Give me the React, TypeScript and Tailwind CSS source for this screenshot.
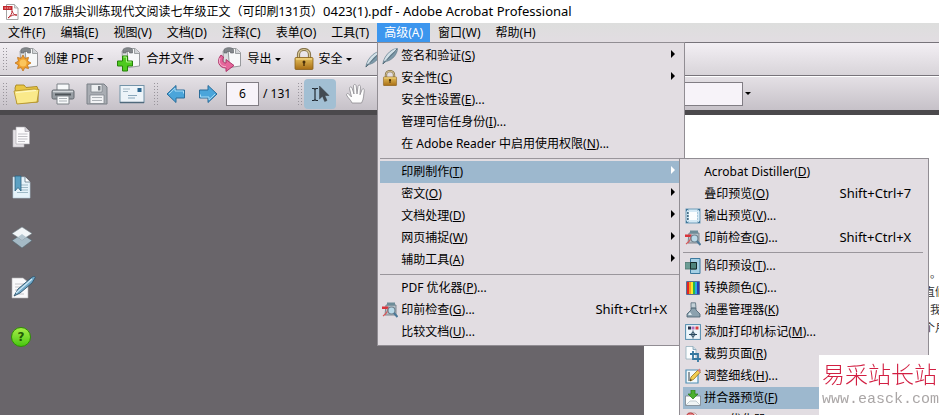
import React from 'react';

type IconProps = { className?: string };

interface MenuEntry {
  label: string;
  hotkey?: string;
  tail?: string;
  shortcut?: string;
  icon?: React.ReactNode;
  submenu?: boolean;
}

const Feather = ({ className = '' }: IconProps) => (
  <svg viewBox="0 0 16 18" className={className} aria-hidden="true">
    <path d="M.8 17C1.500 12 4 8 8 4.500 10.500 2.500 13 1.500 15.500 1.500 15.500 6 12 11 8 13 6 14 4 14.500 3 15z" fill="#7d99a9" stroke="#5b7585" strokeWidth=".6" />
    <path d="M3 14C5 9 9 5 14 2.500" fill="none" stroke="#d3e1e8" strokeWidth="2.400" />
    <path d="M1 17C5 12 10 8 15 2" fill="none" stroke="#4d6370" strokeWidth=".9" />
  </svg>
);

const LockIcon = ({ className = '' }: IconProps) => (
  <svg viewBox="0 0 20 22" className={className} aria-hidden="true">
    <defs>
      <linearGradient id="lockBody" x1="0" y1="0" x2="0" y2="1">
        <stop offset="0" stopColor="#e6c15c" />
        <stop offset="1" stopColor="#a86d14" />
      </linearGradient>
    </defs>
    <path d="M4.500 11V6.500a5.500 5 0 0 1 11 0V11" fill="none" stroke="#85734a" strokeWidth="3.200" />
    <path d="M4.500 11V6.500a5.500 5 0 0 1 11 0V11" fill="none" stroke="#dccb9a" strokeWidth="1.200" />
    <rect x="1" y="9.500" width="18" height="12" rx="1" fill="url(#lockBody)" stroke="#87601c" strokeWidth=".8" />
    <path d="M2 11h16" stroke="#f6df96" />
    <circle cx="10" cy="14" r="1.500" fill="#4a300a" />
    <path d="M10 14v4" stroke="#4a300a" strokeWidth="1.400" />
  </svg>
);

// page with a clip on top, shared by the three task buttons
const TaskPage = ({ children }: { children: React.ReactNode }) => (
  <svg viewBox="0 0 26 26" className="h-[26px] w-[26px] shrink-0" aria-hidden="true">
    <path d="M6 5L14 2.500V18L7 20Z" fill="#dcdee0" stroke="#8e9194" strokeWidth=".8" />
    <path d="M11 2.500h8l4.500 4V20l-11 1.500z" fill="#f7f8f9" stroke="#8d9093" strokeWidth=".9" />
    <path d="M18.500 2.500v5h5" fill="#cfd2d5" stroke="#8d9093" strokeWidth=".8" />
    <path d="M7 6V3.500c2-2.500 8-2.500 9.500 0V7h-3V5.500H10V7H7z" fill="#83878b" stroke="#5c6064" strokeWidth=".6" />
    {children}
  </svg>
);

const CreateIcon = () => (
  <TaskPage>
    <path d="M9 9l1.800 3.400 3.700-1-1 3.700L17 17l-3.500 1.900 1 3.700-3.700-1L9 25l-1.800-3.400-3.700 1 1-3.700L1 17l3.500-1.900-1-3.700 3.700 1z" fill="#f0a02c" stroke="#c0711a" strokeWidth=".8" />
    <circle cx="9" cy="17" r="3.500" fill="#fbc55c" />
  </TaskPage>
);

const CombineIcon = () => (
  <TaskPage>
    <path d="M6.500 10h5v5h5v5h-5v5h-5v-5h-5v-5h5z" fill="#4fca20" stroke="#278309" />
    <path d="M7.500 11h3v5h5" fill="none" stroke="#b2f28c" />
  </TaskPage>
);

const ExportIcon = () => (
  <TaskPage>
    <path d="M4 9c-5 6-2 13 5 13v3.500l8-6-8-6V17c-3 0-4-2-2.500-6z" fill="#e6669b" stroke="#a82d62" strokeWidth=".9" />
    <path d="M3 12c-2 5 1 8.500 6 8.800" fill="none" stroke="#f8b9d2" />
  </TaskPage>
);

const PdfFileIcon = () => (
  <svg viewBox="0 0 16 16" className="h-4 w-4" aria-hidden="true">
    <path d="M3.500.500h8l3.500 3.500v11.500H3.500z" fill="#fdfdfd" stroke="#a4a4a4" />
    <path d="M11.500.500V4H15" fill="#ddd" stroke="#a4a4a4" strokeWidth=".8" />
    <rect x="0" y="2" width="9.500" height="4" fill="#c3262b" />
    <path d="M1.500 4h6" stroke="#f5c9c9" strokeDasharray="1.500 .8" />
    <path d="M5 14c2.500-2 4.500-5 4-7.500C10 10 12 11.500 14 11c-3-.8-6 .5-9 3z" fill="none" stroke="#b7252c" />
  </svg>
);

const FolderIcon = () => (
  <svg viewBox="0 0 28 22" className="h-[22px] w-7" aria-hidden="true">
    <path d="M2 5l1-3h8l2 2.500 11-1 1 3V19L4 20.500z" fill="#e9c643" stroke="#a78720" strokeWidth=".9" />
    <path d="M1 8l20-2 5 .5-2 12.500L4 21z" fill="#fae98a" stroke="#b6952c" strokeWidth=".9" />
    <path d="M3 9.500l20-2" stroke="#fff9cb" />
  </svg>
);

const PrinterIcon = () => (
  <svg viewBox="0 0 24 24" className="h-6 w-6" aria-hidden="true">
    <path d="M6 8V2h12v6" fill="#f7f9fa" stroke="#7d8287" />
    <rect x="1" y="8" width="22" height="9" rx="1.500" fill="#989ea4" stroke="#62686e" />
    <path d="M2 9.500h20" stroke="#d3d7da" strokeWidth="1.500" />
    <path d="M4 12.500h16" stroke="#4e5459" strokeWidth="2" />
    <path d="M6 14h12v8H6z" fill="#f7f9fa" stroke="#7d8287" />
    <path d="M8 16.500h8M8 19h8" stroke="#aab0b5" />
  </svg>
);

const SaveIcon = () => (
  <svg viewBox="0 0 24 24" className="h-6 w-6" aria-hidden="true">
    <path d="M2 2h17l3 3v17H2z" fill="#a9adb3" stroke="#7b8087" />
    <path d="M6 2.500h11V10H6z" fill="#eceef0" stroke="#7e848a" strokeWidth=".8" />
    <path d="M13 4h2.500v4.500H13z" fill="#767c83" />
    <path d="M5 13h14v8.500H5z" fill="#f2f3f5" stroke="#7e848a" strokeWidth=".8" />
    <path d="M7 15.500h10M7 18.500h10" stroke="#abb0b5" />
  </svg>
);

const MailIcon = () => (
  <svg viewBox="0 0 26 20" className="h-5 w-[26px]" aria-hidden="true">
    <rect x="1" y="1.500" width="24" height="17" fill="#edf4f9" stroke="#7393a8" />
    <path d="M1 18.500h24" stroke="#506a7c" strokeWidth="1.500" />
    <rect x="18.500" y="4" width="4" height="4" fill="#2d6790" />
    <path d="M4 5h7M4 7.500h5" stroke="#a4b8c5" />
    <path d="M9 11.500h9M9 14h7" stroke="#88a6ba" />
  </svg>
);

const ArrowIcon = ({ className = '' }: IconProps) => (
  <svg viewBox="0 0 20 20" className={className} aria-hidden="true">
    <path d="M1 10L10 1.500V6h8.500v8H10v4.500z" fill="#4ba5da" stroke="#2b6d9a" />
    <path d="M3 10l6-5.800V7h8.500v2.500" fill="none" stroke="#a9dcf6" />
  </svg>
);

const SelectToolIcon = () => (
  <svg viewBox="0 0 20 18" className="h-[18px] w-5" aria-hidden="true">
    <path d="M2 3.500h2l1 1 1-1h2M5 4.500v10M2 15.500h2l1-1 1 1h2" fill="none" stroke="#222b33" strokeWidth="1.200" />
    <path d="M9.500 1v13l3-2.800 2.200 5.300 2.300-1-2.200-5H19z" fill="#434b53" stroke="#343a40" strokeWidth=".5" />
  </svg>
);

const HandIcon = () => (
  <svg viewBox="0 0 22 22" className="h-[22px] w-[22px]" aria-hidden="true">
    <path d="M7 20c-1-3-4-5-5.500-8 0-2 2-2 3 0l2 2L4.500 5.500c0-2 2-2.300 2.500-.5l2 6-.5-8c0-2 2.500-2 2.700 0l.8 8 1-7.500c.3-2 2.500-1.700 2.500.2l-.5 8 2-5c.7-1.700 2.600-1 2.300.8C18.500 12 19 16 16.500 20z" fill="#fdfdfd" stroke="#8d8b90" strokeWidth=".8" />
  </svg>
);

const PagesIcon = () => (
  <svg viewBox="0 0 22 24" className="h-6 w-[22px]" aria-hidden="true">
    <path d="M2 5h11v17H2z" fill="#e4e1e5" stroke="#bab6bc" strokeWidth=".6" />
    <path d="M5 2h9l4.500 4.500V19H5z" fill="#fcfbfd" stroke="#a9a6ab" strokeWidth=".6" />
    <path d="M14 2v4.500h4.500" fill="#d5d2d8" stroke="#9b979d" strokeWidth=".6" />
    <path d="M7 9h9.500M7 11.500h9.500M7 14h9.500M7 16.500h7" stroke="#b3b2b8" strokeWidth=".8" />
  </svg>
);

const BookmarkPageIcon = () => (
  <svg viewBox="0 0 22 24" className="h-6 w-[22px]" aria-hidden="true">
    <path d="M2 2h12l5 5v16H2z" fill="#e6f3fa" stroke="#b6cfdd" strokeWidth=".6" />
    <path d="M14 2v5h5" fill="#fff" stroke="#5d7786" strokeWidth=".8" />
    <path d="M9 10h8M9 12.500h8M9 15h8M6 17.500h11" stroke="#8ba9b9" strokeWidth=".8" />
    <path d="M4 1h6v15l-3-3.500L4 16z" fill="#5ba0c2" stroke="#2c617e" strokeWidth=".8" />
  </svg>
);

const LayersIcon = () => (
  <svg viewBox="0 0 22 24" className="h-6 w-[22px]" aria-hidden="true">
    <path d="M1 15.500L11 9l10 6.500L11 23z" fill="#a5bac6" stroke="#536670" strokeWidth=".6" />
    <path d="M1 8.500L11 2l10 6.500L11 15z" fill="#f2f6f8" stroke="#73848d" strokeWidth=".6" />
    <path d="M7 12l4-3 4 3-4 3z" fill="#b4c6d0" />
  </svg>
);

const SignPageIcon = () => (
  <svg viewBox="0 0 26 24" className="h-6 w-[26px]" aria-hidden="true">
    <path d="M1 3h11l5 4v16H1z" fill="#f9f9fb" stroke="#b2afb4" strokeWidth=".6" />
    <path d="M4 9h9M4 12h8M4 15h5M4 19h9" stroke="#b7b7bd" strokeWidth=".8" />
    <path d="M3 21l4-7L20 3c2-2 5-2 4 0L21 8 9 18z" fill="#71a9c9" stroke="#2f546b" strokeWidth=".9" />
    <path d="M5 18L21 4" stroke="#d0e9f6" strokeWidth="1.200" />
  </svg>
);

const HelpIcon = () => (
  <span className="flex h-5 w-5 items-center justify-center rounded-full border border-[#2e9300] bg-gradient-to-b from-[#a4ee45] to-[#45c70c] font-['DejaVu_Sans',sans-serif] text-xs font-bold text-[#215c05]">
    ?
  </span>
);

const PreflightIcon = () => (
  <svg viewBox="0 0 16 16" className="h-4 w-4" aria-hidden="true">
    <path d="M4 3h10v10H3z" fill="#b8c4cb" stroke="#69757d" strokeWidth=".8" />
    <path d="M5 .5h8v3H5z" fill="#6d8c98" />
    <path d="M0 4.500h6.500V7H0z" fill="#d9333b" />
    <path d="M1 14c3-2 5-5 5-8" fill="none" stroke="#d75a5c" strokeWidth="1.200" />
    <circle cx="9.500" cy="8.500" r="3.500" fill="#b9d9e8" stroke="#71838f" strokeWidth="1.200" />
    <path d="M12 11l3.500 4" stroke="#4a7898" strokeWidth="2" />
  </svg>
);

const OutputPreviewIcon = () => (
  <svg viewBox="0 0 16 16" className="h-4 w-4" aria-hidden="true">
    <rect x="1" y="1" width="14" height="14" fill="#d5e9f5" stroke="#6e9dba" />
    <path d="M4 4h8v8H4z" fill="#fbfdfe" />
    <path d="M3.500 1v14M12.500 1v14" stroke="#8fb4ca" strokeWidth=".6" strokeDasharray="2 1" />
    <path d="M2 5h1.500M2 8h1.500M2 11h1.500" stroke="#1e4560" strokeWidth="1.500" />
    <path d="M1 1h2.500L1 3.500zM15 1h-2.500L15 3.500zM1 15h2.500L1 12.500zM15 15h-2.500l2.500-2.500z" fill="#3d7397" />
  </svg>
);

const TrapIcon = () => (
  <svg viewBox="0 0 16 16" className="h-4 w-4" aria-hidden="true">
    <path d="M5.500.500H15v15H5.500z" fill="#a5d0e5" stroke="#3b789d" />
    <path d="M0 4.500h11.500v6.500H0z" fill="#6c9c94" stroke="#4b736d" strokeWidth=".8" />
    <path d="M5.500 4.500h6v6.500h-6z" fill="#4e847c" stroke="#162c2a" />
  </svg>
);

const ColorsIcon = () => (
  <svg viewBox="0 0 16 16" className="h-4 w-4" aria-hidden="true">
    <path d="M2 2h3v12H2z" fill="#e22525" />
    <path d="M4 2h3v12H4z" fill="#f59a1d" />
    <path d="M6 2h3v12H6z" fill="#f8ea2c" />
    <path d="M8 2h3v12H8z" fill="#28b64a" />
    <path d="M10 2h2.500v12H10z" fill="#27a9e6" />
    <path d="M12 2h2.500v12H12z" fill="#2c3cb5" />
    <path d="M1.500 1.500h13v13h-13z" fill="none" stroke="#576f98" />
  </svg>
);

const InkIcon = () => (
  <svg viewBox="0 0 16 16" className="h-4 w-4" aria-hidden="true">
    <path d="M6 6h5v2l4 4v3H2v-3l4-4z" fill="#8ba1ae" stroke="#475f6e" strokeWidth=".8" />
    <path d="M6 .8h4.500l.5 5H6z" fill="#c3d0d7" stroke="#566b78" strokeWidth=".8" />
    <path d="M5 10l-2 3h4z" fill="#dce9ef" />
  </svg>
);

const PrinterMarksIcon = () => (
  <svg viewBox="0 0 16 16" className="h-4 w-4" aria-hidden="true">
    <rect x=".6" y=".6" width="14.800" height="14.800" fill="#edf6fb" stroke="#518bad" />
    <path d="M3 2.500h3v3H3z" fill="#283046" />
    <path d="M6.500 2.500h3v3h-3z" fill="#ae6fba" />
    <path d="M10.500 2.500h3v3h-3z" fill="#db3b3e" />
    <circle cx="8" cy="10.500" r="2" fill="none" stroke="#476b83" />
    <path d="M8 6.500v8M4 10.500h8" stroke="#29465a" />
  </svg>
);

const CropIcon = () => (
  <svg viewBox="0 0 16 16" className="h-4 w-4" aria-hidden="true">
    <path d="M1 .5h7l3 3V13H1z" fill="#fbfdfe" stroke="#93aebc" strokeWidth=".8" />
    <path d="M8 .5v3h3" fill="#cbdee8" stroke="#7c9bad" strokeWidth=".8" />
    <path d="M8 5v8h8M5 8h8v8" fill="none" stroke="#34779f" strokeWidth="1.800" />
  </svg>
);

const HairlineIcon = () => (
  <svg viewBox="0 0 16 16" className="h-4 w-4" aria-hidden="true">
    <path d="M1 2h12v13H1z" fill="#f3f9fc" stroke="#5190b4" strokeWidth="1.200" />
    <path d="M4 4v9" stroke="#303f49" />
    <path d="M5 13l1-4 7-7 2.500 2-7 7.500z" fill="#f2ce50" stroke="#987019" strokeWidth=".8" />
    <path d="M12.500 2.500l2-2 1.500 2-1.500 2z" fill="#d48082" />
    <path d="M5 13l.7-2 1.200 1z" fill="#222" />
  </svg>
);

const FlattenerIcon = () => (
  <svg viewBox="0 0 16 16" className="h-4 w-4" aria-hidden="true">
    <path d="M.5 6h15v9.500H.5z" fill="#fcfdfc" stroke="#77828b" strokeWidth=".8" />
    <path d="M1 15l4-4h6l4 4" fill="#f0f4f5" stroke="#b5c0c7" strokeWidth=".8" />
    <path d="M6 0h4v4h3L8 9 3 4h3z" fill="#4cb02e" stroke="#287814" strokeWidth=".7" />
  </svg>
);

const OptimizerIcon = () => (
  <svg viewBox="0 0 16 16" className="h-4 w-4" aria-hidden="true">
    <path d="M3 1h7l4 4v10H3z" fill="#f7eaea" stroke="#b39393" strokeWidth=".8" />
    <circle cx="5.500" cy="5.500" r="4.500" fill="#e58a8c" stroke="#bd3437" />
    <path d="M3 6l3-3 2 4" fill="none" stroke="#fff" />
  </svg>
);

const menuBar = [
  ['文件', 'F'],
  ['编辑', 'E'],
  ['视图', 'V'],
  ['文档', 'D'],
  ['注释', 'C'],
  ['表单', 'O'],
  ['工具', 'T'],
  ['高级', 'A'],
  ['窗口', 'W'],
  ['帮助', 'H'],
];

const advancedTop: MenuEntry[] = [
  { label: '签名和验证', hotkey: 'S', icon: <Feather className="h-[18px] w-4" />, submenu: true },
  { label: '安全性', hotkey: 'C', icon: <LockIcon className="h-4 w-4" />, submenu: true },
  { label: '安全性设置', hotkey: 'E', tail: '...' },
  { label: '管理可信任身份', hotkey: 'I', tail: '...' },
  { label: '在 Adobe Reader 中启用使用权限', hotkey: 'N', tail: '...' },
];

const advancedMiddle: MenuEntry[] = [
  { label: '密文', hotkey: 'O', submenu: true },
  { label: '文档处理', hotkey: 'D', submenu: true },
  { label: '网页捕捉', hotkey: 'W', submenu: true },
  { label: '辅助工具', hotkey: 'A', submenu: true },
];

const advancedBottom: MenuEntry[] = [
  { label: 'PDF 优化器', hotkey: 'P', tail: '...' },
  { label: '印前检查', hotkey: 'G', tail: '...', shortcut: 'Shift+Ctrl+X', icon: <PreflightIcon /> },
  { label: '比较文档', hotkey: 'U', tail: '...' },
];

const printTop: MenuEntry[] = [
  { label: 'Acrobat Distiller', hotkey: 'D' },
  { label: '叠印预览', hotkey: 'O', shortcut: 'Shift+Ctrl+7' },
  { label: '输出预览', hotkey: 'V', tail: '...', icon: <OutputPreviewIcon /> },
  { label: '印前检查', hotkey: 'G', tail: '...', shortcut: 'Shift+Ctrl+X', icon: <PreflightIcon /> },
];

const printBottom: MenuEntry[] = [
  { label: '陷印预设', hotkey: 'T', tail: '...', icon: <TrapIcon /> },
  { label: '转换颜色', hotkey: 'C', tail: '...', icon: <ColorsIcon /> },
  { label: '油墨管理器', hotkey: 'K', icon: <InkIcon /> },
  { label: '添加打印机标记', hotkey: 'M', tail: '...', icon: <PrinterMarksIcon /> },
  { label: '裁剪页面', hotkey: 'R', icon: <CropIcon /> },
  { label: '调整细线', hotkey: 'H', tail: '...', icon: <HairlineIcon /> },
];

const MenuRow = ({ entry, active = false }: { entry: MenuEntry; active?: boolean }) => (
  <button
    type="button"
    className={`flex h-[22px] w-full items-center whitespace-nowrap pl-[2px] text-left ${active ? 'bg-[#9db8ce]' : ''}`}
  >
    <span className="flex w-[19px] shrink-0 items-center">{entry.icon}</span>
    <span>
      {entry.label}({entry.hotkey && <u className="underline-offset-1">{entry.hotkey}</u>}){entry.tail}
    </span>
    {entry.shortcut && <span className="ml-auto pr-3 text-[13px]">{entry.shortcut}</span>}
    {entry.submenu && (
      <span
        className={`mb-1 ml-auto mr-1 border-y-4 border-l-4 border-y-transparent ${active ? 'border-l-white' : 'border-l-black'}`}
      />
    )}
  </button>
);

const MenuGroup = ({ entries }: { entries: MenuEntry[] }) => (
  <>
    {entries.map((entry) => (
      <li key={entry.label}>
        <MenuRow entry={entry} />
      </li>
    ))}
  </>
);

const Divider = () => (
  <li className="flex h-[6px] items-center" role="separator">
    <span className="h-px w-full bg-[#9a969c]" />
  </li>
);

const PrintSubmenu = () => (
  <ul className="absolute -top-[3px] left-[299px] z-30 w-[250px] border border-[#918d93] bg-[#e2dde2] py-[2px] pl-[3px] pr-[5px]">
    <MenuGroup entries={printTop} />
    <Divider />
    <MenuGroup entries={printBottom} />
    <li>
      <MenuRow active entry={{ label: '拼合器预览', hotkey: 'F', icon: <FlattenerIcon /> }} />
    </li>
    <li>
      <MenuRow entry={{ label: 'PDF 优化器', hotkey: 'P', tail: '...', icon: <OptimizerIcon /> }} />
    </li>
  </ul>
);

const AdvancedMenu = () => (
  <ul className="absolute left-0 top-full z-20 w-[308px] border border-[#918d93] bg-[#e2dde2] py-[2px] pl-[2px] pr-[5px] text-black">
    <MenuGroup entries={advancedTop} />
    <Divider />
    <li className="relative">
      <MenuRow active entry={{ label: '印刷制作', hotkey: 'T', submenu: true }} />
      <PrintSubmenu />
    </li>
    <MenuGroup entries={advancedMiddle} />
    <Divider />
    <MenuGroup entries={advancedBottom} />
  </ul>
);

const Grip = () => (
  <span className="h-6 w-[5px] shrink-0 bg-[radial-gradient(#99959c_1px,transparent_1px)] bg-[length:3px_3px]" />
);

const Caret = () => <span className="border-x-[3px] border-t-[3px] border-x-transparent border-t-black" />;

const TaskButton = ({ icon, label }: { icon: React.ReactNode; label: string }) => (
  <button type="button" className="flex items-center gap-1 whitespace-nowrap">
    {icon}
    <span>{label}</span>
    <Caret />
  </button>
);

const App: React.FC = () => {
  return (
    <div className="flex h-screen flex-col overflow-hidden bg-[#69656a] font-['Noto_Sans','Noto_Sans_CJK_SC',sans-serif] text-xs text-black">
      <header className="flex h-[23px] shrink-0 items-center gap-1 whitespace-nowrap bg-white pl-[3px]">
        <PdfFileIcon />
        <h1>
          2017版鼎尖训练现代文阅读七年级正文（可印刷131页）
          <span className="text-[13px]">0423(1).pdf - Adobe Acrobat Professional</span>
        </h1>
      </header>

      <nav className="flex h-[19px] shrink-0 gap-px bg-gradient-to-b from-[#dddedd] to-[#e2dde2] pl-px">
        {menuBar.map(([label, key]) => (
          <div key={key} className="relative">
            <button
              type="button"
              className={`h-[19px] whitespace-nowrap px-[7px] leading-[18px] ${key === 'A' ? 'bg-[#3c96ee] text-white' : ''}`}
            >
              {label}({key})
            </button>
            {key === 'A' && <AdvancedMenu />}
          </div>
        ))}
      </nav>

      <div className="flex h-[34px] shrink-0 items-center border-y border-t-[#77737a] border-b-[#77737a] bg-gradient-to-b from-[#f3eff4] to-[#d8d4d9] pl-[2px]">
        <Grip />
        <div className="flex items-center gap-[13px] pl-[7px]">
          <TaskButton icon={<CreateIcon />} label="创建 PDF" />
          <TaskButton icon={<CombineIcon />} label="合并文件" />
          <TaskButton icon={<ExportIcon />} label="导出" />
          <TaskButton icon={<LockIcon className="h-[22px] w-5" />} label="安全" />
          <button type="button" aria-label="签名">
            <Feather className="h-5 w-4" />
          </button>
        </div>
      </div>

      <div className="flex h-[34px] shrink-0 items-center border-t border-white bg-gradient-to-b from-[#e4e0e5] to-[#c6c1c8] pl-[2px]">
        <Grip />
        <div className="flex items-center gap-[10px] pl-[6px] pr-2">
          <button type="button" aria-label="打开"><FolderIcon /></button>
          <button type="button" aria-label="打印"><PrinterIcon /></button>
          <button type="button" aria-label="保存"><SaveIcon /></button>
          <button type="button" aria-label="电子邮件"><MailIcon /></button>
        </div>
        <Grip />
        <div className="flex items-center gap-3 px-2">
          <button type="button" aria-label="上一页"><ArrowIcon className="h-5 w-5" /></button>
          <button type="button" aria-label="下一页"><ArrowIcon className="h-5 w-5 rotate-180" /></button>
        </div>
        <label className="flex items-center gap-1 whitespace-nowrap">
          <input
            aria-label="页码"
            defaultValue="6"
            className="h-6 w-[33px] border border-[#817d84] bg-[#f7f3f9] text-center outline-none"
          />
          / 131
        </label>
        <span className="w-[6px]" />
        <Grip />
        <button type="button" aria-label="选择工具" className="ml-[2px] flex h-[30px] w-8 items-center justify-center rounded-sm bg-[#a2bfd3]">
          <SelectToolIcon />
        </button>
        <button type="button" aria-label="手形工具" className="ml-[9px]"><HandIcon /></button>
        <input
          aria-label="查找"
          className="ml-[246px] h-6 w-[130px] border border-[#817d84] bg-[#f7f3f9] px-1 outline-none"
        />
        <button type="button" aria-label="查找选项" className="flex items-center pl-[2px]"><Caret /></button>
      </div>

      <main className="flex min-h-0 flex-1 border-t-[5px] border-[#4b494c]">
        <aside className="flex w-[644px] shrink-0 flex-col items-start gap-[26px] pl-[11px] pt-[10px]">
          <button type="button" aria-label="页面"><PagesIcon /></button>
          <button type="button" aria-label="书签"><BookmarkPageIcon /></button>
          <button type="button" aria-label="图层"><LayersIcon /></button>
          <button type="button" aria-label="签名面板"><SignPageIcon /></button>
          <button type="button" aria-label="帮助" className="pt-[2px]"><HelpIcon /></button>
        </aside>
        <article className="flex-1 overflow-hidden whitespace-nowrap bg-white pl-[280px] pt-[150px] text-[11px] leading-[18px] text-[#333]">
          <p className="pl-[6px]">。</p>
          <p>直们</p>
          <p className="pl-[6px]">我</p>
          <p>个月</p>
        </article>
      </main>

      <footer className="fixed bottom-0 right-0 z-40 h-[60px] w-[120px] whitespace-nowrap bg-white pl-[3px] pt-1">
        <p className="text-[23px] font-light leading-[30px] text-[#d21f42]">易采站长站</p>
        <p className="font-['Liberation_Mono',monospace] text-[15px] leading-[22px] text-[#aaa6a6]">www.easck.com</p>
      </footer>
    </div>
  );
};

export default App;
